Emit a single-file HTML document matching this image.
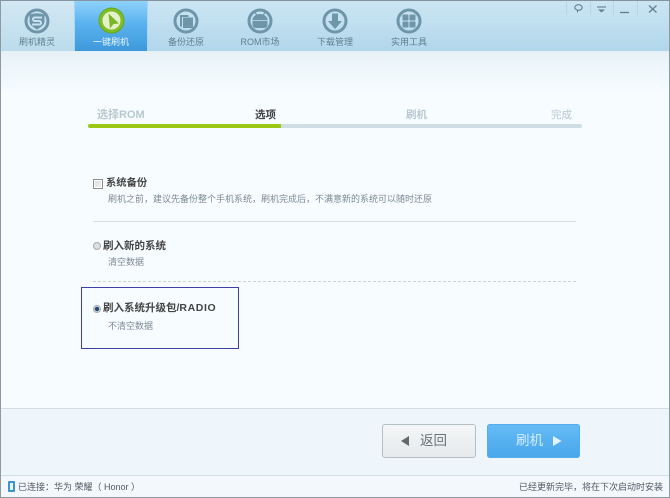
<!DOCTYPE html>
<html lang="zh">
<head>
<meta charset="utf-8">
<title>一键刷机</title>
<style>
html,body{margin:0;padding:0}
body{width:670px;height:498px;overflow:hidden;position:relative;background:#f6fcff;font-family:"Liberation Sans","Noto Sans CJK SC",sans-serif}
.a{position:absolute;white-space:nowrap}
.t{position:absolute;white-space:nowrap;line-height:14px;height:14px}
.head{left:0;top:0;width:670px;height:51px;background:linear-gradient(180deg,#cbe5f2 0,#c3e1f1 35%,#b1d6eb 100%)}
.tab{font-size:9px;color:#5f7f90;text-align:center;width:74px;top:35px}
</style>
</head>
<body>
<div class="a head"></div>
<div class="a" style="left:0;top:0;width:74px;height:51px;background:linear-gradient(180deg,#d3e8f3,#bcdcec)"></div>
<div class="a" style="left:0;top:51px;width:670px;height:1px;background:#e2f1f8"></div>
<div class="a" style="left:0;top:52px;width:670px;height:40px;background:linear-gradient(180deg,#e8f2f6,#f6fcff)"></div>
<div class="a" style="left:74px;top:1px;width:74px;height:50px;background:linear-gradient(180deg,#8fd2fb 0,#5ab2ef 45%,#3f98da 100%);box-shadow:inset 1px 0 0 #a5d8f6,inset -1px 0 0 #a5d8f6"></div>

<svg class="a" style="left:0;top:0" width="670" height="52" viewBox="0 0 670 52">
  <g fill="none" stroke="#6f95a9" stroke-width="3">
    <circle cx="37" cy="21" r="11"/>
    <circle cx="186" cy="21" r="11"/>
    <circle cx="260" cy="21" r="11"/>
    <circle cx="335" cy="21" r="11"/>
    <circle cx="409" cy="21" r="11"/>
  </g>
  <path d="M29.500 14.500q7.500-2.500 15 0v7c0 3.500-3.500 5.500-7.500 8c-4-2.500-7.500-4.500-7.500-8z" fill="#6f95a9"/>
  <path d="M42 17.500h-7.500c-2 0-2 3.500 0 3.500h5c2 0 2 3.500 0 3.500h-7.500" fill="none" stroke="#c8e3f0" stroke-width="2"/>
  <circle cx="111.500" cy="20.500" r="12.500" fill="#7fbe25" stroke="#68a61b" stroke-width="1"/>
  <circle cx="111.500" cy="20.500" r="9" fill="#e4f2cc"/>
  <path d="M108.500 13.500l10.500 10l-5.500.5l-3.500 4.500z" fill="#7ab626"/>
  <path d="M180 15h8.500v2h-6.500v9.500h-2z" fill="#6f95a9"/>
  <rect x="183" y="17.500" width="10" height="10.500" fill="#6f95a9"/>
  <path d="M252.500 20a7.500 6 0 0 1 15 0z" fill="#6f95a9"/>
  <path d="M252.500 20.800h15v4.200a3 3 0 0 1-3 3h-9a3 3 0 0 1-3-3z" fill="#6f95a9"/>
  <path d="M255 12.500l2.200 3M265 12.500l-2.200 3" stroke="#6f95a9" stroke-width="1.100"/>
  <path d="M332 13.500h6v7.500h4l-7 8l-7-8h4z" fill="#6f95a9"/>
  <g fill="#6f95a9">
    <rect x="402.500" y="14.500" width="6" height="6" rx=".8"/>
    <rect x="409.500" y="14.500" width="6" height="6" rx=".8"/>
    <rect x="402.500" y="21.500" width="6" height="6" rx=".8"/>
    <rect x="409.500" y="21.500" width="6" height="6" rx=".8"/>
  </g>
  <g stroke="#b7d5e4" stroke-width="1">
    <path d="M566.500 1v14M590.500 1v14M613.500 1v14M637.500 1v14"/>
  </g>
  <ellipse cx="578.500" cy="7.500" rx="3.700" ry="2.800" fill="none" stroke="#5f7f90" stroke-width="1.100"/>
  <path d="M577.500 10.500v2" stroke="#5f7f90" stroke-width="1"/>
  <path d="M597 7h9" stroke="#5f7f90" stroke-width="1.100"/>
  <path d="M598 9.500h7l-3.500 3z" fill="#5f7f90"/>
  <path d="M620 12.500h9" stroke="#5f7f90" stroke-width="1.300"/>
  <path d="M649 5.500l7.500 7M656.500 5.500l-7.500 7" stroke="#5f7f90" stroke-width="1.200" fill="none"/>
</svg>

<div class="t tab" style="left:0">刷机精灵</div>
<div class="t tab" style="left:74px;color:#e9f6ff">一键刷机</div>
<div class="t tab" style="left:149px">备份还原</div>
<div class="t tab" style="left:223px">ROM市场</div>
<div class="t tab" style="left:298px">下载管理</div>
<div class="t tab" style="left:372px">实用工具</div>

<div class="t" style="left:97px;top:108px;font-size:11px;font-weight:bold;color:#b9c8cf">选择ROM</div>
<div class="t" style="left:255px;top:108px;font-size:10.500px;font-weight:bold;color:#3f3f3f">选项</div>
<div class="t" style="left:406px;top:108px;font-size:10.500px;font-weight:bold;color:#b9c8cf">刷机</div>
<div class="t" style="left:551px;top:108px;font-size:10.500px;color:#b9c8cf">完成</div>
<div class="a" style="left:88px;top:124px;width:494px;height:4px;border-radius:2px;background:#d0dde3"></div>
<div class="a" style="left:88px;top:124px;width:193px;height:4px;border-radius:2px 0 0 2px;background:#9cc815"></div>

<div class="a" style="left:93px;top:179px;width:8px;height:8px;border:1px solid #8f8f8f;background:linear-gradient(135deg,#d9d9d9,#f4f4f4);box-shadow:inset 0 0 0 1px #fff"></div>
<div class="t" style="left:106px;top:177px;font-size:10.300px;font-weight:bold;color:#444">系统备份</div>
<div class="t" style="left:108px;top:192px;font-size:9px;color:#7d8a90">刷机之前，建议先备份整个手机系统，刷机完成后，不满意新的系统可以随时还原</div>
<div class="a" style="left:93px;top:221px;width:483px;height:1px;background:#d7dfe2"></div>

<div class="a" style="left:93px;top:242px;width:6px;height:6px;border:1px solid #aaa;border-radius:50%;background:#dedede"></div>
<div class="t" style="left:103px;top:239px;font-size:10.500px;font-weight:bold;color:#444">刷入新的系统</div>
<div class="t" style="left:108px;top:255px;font-size:9px;color:#7d8a90">清空数据</div>
<div class="a" style="left:93px;top:281px;width:483px;height:0;border-top:1px dashed #ccd4d8"></div>

<div class="a" style="left:81px;top:287px;width:156px;height:60px;border:1px solid #3f3fa8"></div>
<div class="a" style="left:93px;top:305px;width:6px;height:6px;border:1px solid #aaa;border-radius:50%;background:radial-gradient(circle,#234a70 0,#234a70 45%,#e6e6e6 60%)"></div>
<div class="t" style="left:103px;top:301px;font-size:10.500px;font-weight:bold;color:#444">刷入系统升级包/<span style="letter-spacing:.6px">RADIO</span></div>
<div class="t" style="left:108px;top:319px;font-size:9px;color:#7d8a90">不清空数据</div>

<div class="a" style="left:0;top:408px;width:670px;height:67px;background:#eef6fb;border-top:1px solid #d3dee4;box-sizing:border-box"></div>
<div class="a" style="left:382px;top:424px;width:92px;height:32px;border:1px solid #b4bec3;border-radius:3px;background:linear-gradient(180deg,#f4f6f7,#e6eaec)"></div>
<svg class="a" style="left:400px;top:435px" width="10" height="12"><path d="M9 1v10L1 6z" fill="#62696d"/></svg>
<div class="t" style="left:420px;top:432px;height:18px;line-height:18px;font-size:13.500px;color:#6a7479">返回</div>
<div class="a" style="left:487px;top:424px;width:93px;height:34px;border-radius:3px;background:linear-gradient(180deg,#66bcf6,#48a6ea);box-shadow:inset 0 0 0 1px #54aeee"></div>
<div class="t" style="left:516px;top:432px;height:18px;line-height:18px;font-size:13.500px;color:#d6eeff">刷机</div>
<svg class="a" style="left:552px;top:435px" width="10" height="12"><path d="M1 1v10l8.500-5z" fill="#e4f4ff"/></svg>

<div class="a" style="left:0;top:475px;width:670px;height:23px;background:#f2f8fc;border-top:1px solid #d3dee4;box-sizing:border-box"></div>
<div class="a" style="left:8px;top:481px;width:3px;height:7px;border:2px solid #3a93d3;border-radius:1px;background:#eaf6fd"></div>
<div class="t" style="left:18px;top:480px;font-size:9px;color:#505a60">已连接：华为 荣耀（ Honor ）</div>
<div class="t" style="left:519px;top:480px;font-size:9px;color:#505a60">已经更新完毕，将在下次启动时安装</div>

<div class="a" style="left:0;top:0;width:668px;height:496px;border:1px solid #8d9aa2;border-top-color:#8494a0"></div>
</body>
</html>
